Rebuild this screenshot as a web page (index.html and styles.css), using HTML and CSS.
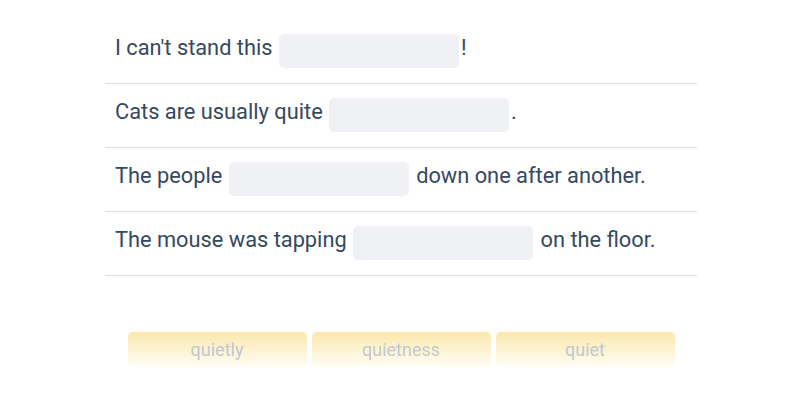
FILE: index.html
```html
<!DOCTYPE html>
<html>
<head>
<meta charset="utf-8">
<link rel="stylesheet" href="styles.css">
</head>
<body>
<main class="exercise">
  <ul class="sentences">
    <li class="sentence">I can't stand this <span class="blank"></span>!</li>
    <li class="sentence">Cats are usually quite <span class="blank"></span>.</li>
    <li class="sentence">The people <span class="blank"></span> down one after another.</li>
    <li class="sentence">The mouse was tapping <span class="blank"></span> on the floor.</li>
  </ul>
  <div class="bank">
    <div class="chip">quietly</div>
    <div class="chip chip-reflect">quietness</div>
    <div class="chip">quiet</div>
  </div>
</main>
</body>
</html>
```
FILE: styles.css
```css
html, body {
  margin: 0;
  padding: 0;
  background: #ffffff;
}
body {
  font-family: Roboto, "Liberation Sans", sans-serif;
}
.exercise {
  width: 592px;
  margin: 20px 0 0 105px;
}
.sentences {
  list-style: none;
  margin: 0;
  padding: 0;
}
.sentence {
  padding: 14px 10px 15px;
  border-bottom: 1px solid #e0e0e2;
  font-size: 21.8px;
  color: #34495e;
  line-height: 24px;
}
.blank {
  display: inline-block;
  width: 180px;
  height: 34px;
  margin: 0 2px 0 1px;
  background: #eff1f5;
  border-radius: 5px;
  vertical-align: -13px;
}
.bank {
  display: flex;
  justify-content: center;
  gap: 5px;
  margin-top: 56px;
}
.chip {
  width: 179px;
  height: 35px;
  border-radius: 5px;
  background: linear-gradient(to bottom, #fbe8ae 0%, #fdf3d2 50%, #fffdf6 100%);
  color: #c3c7cf;
  font-size: 18px;
  display: flex;
  align-items: center;
  justify-content: center;
}
.chip-reflect {
  -webkit-box-reflect: below 5px linear-gradient(to bottom, transparent 55%, rgba(255, 255, 255, 0.22));
}
```
